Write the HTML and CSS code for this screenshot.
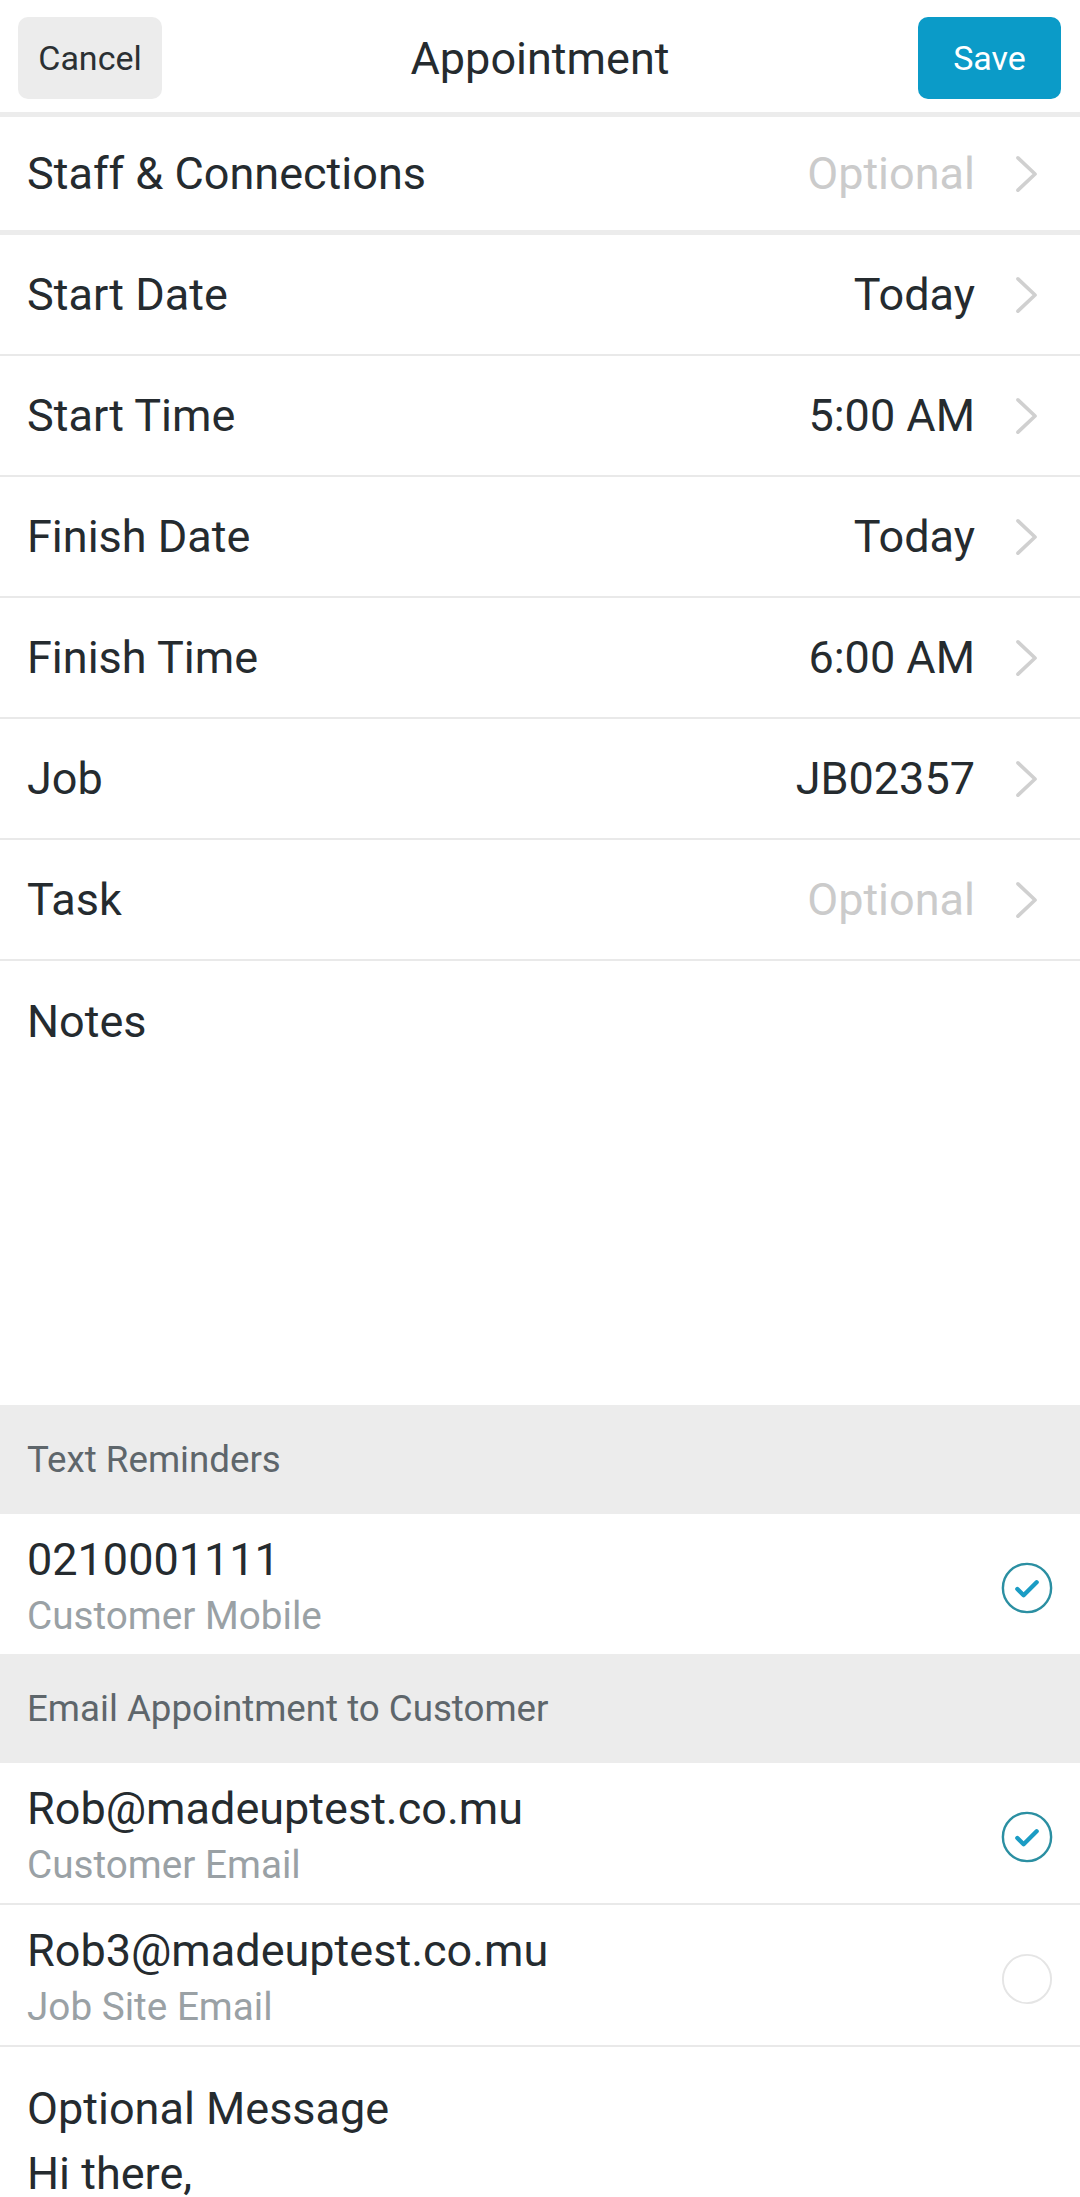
FILE: index.html
```html
<!DOCTYPE html>
<html lang="en">
<head>
    <meta charset="UTF-8">
    <meta name="viewport" content="width=device-width, initial-scale=1.0">
    <title>Appointment</title>
    <link rel="stylesheet" href="styles.css">
</head>
<body>
    <header class="topbar">
        <button class="btn btn-cancel">Cancel</button>
        <h1 class="title">Appointment</h1>
        <button class="btn btn-save">Save</button>
    </header>

    <div class="group group-staff">
        <div class="row">
            <span class="label">Staff &amp; Connections</span>
            <span class="value placeholder">Optional</span>
            <svg class="chevron" viewBox="0 0 24 40"><polyline points="3,3 21,20 3,37"/></svg>
        </div>
    </div>

    <div class="group">
        <div class="row">
            <span class="label">Start Date</span>
            <span class="value">Today</span>
            <svg class="chevron" viewBox="0 0 24 40"><polyline points="3,3 21,20 3,37"/></svg>
        </div>
        <div class="row">
            <span class="label">Start Time</span>
            <span class="value">5:00 AM</span>
            <svg class="chevron" viewBox="0 0 24 40"><polyline points="3,3 21,20 3,37"/></svg>
        </div>
        <div class="row">
            <span class="label">Finish Date</span>
            <span class="value">Today</span>
            <svg class="chevron" viewBox="0 0 24 40"><polyline points="3,3 21,20 3,37"/></svg>
        </div>
        <div class="row">
            <span class="label">Finish Time</span>
            <span class="value">6:00 AM</span>
            <svg class="chevron" viewBox="0 0 24 40"><polyline points="3,3 21,20 3,37"/></svg>
        </div>
        <div class="row">
            <span class="label">Job</span>
            <span class="value">JB02357</span>
            <svg class="chevron" viewBox="0 0 24 40"><polyline points="3,3 21,20 3,37"/></svg>
        </div>
        <div class="row">
            <span class="label">Task</span>
            <span class="value placeholder">Optional</span>
            <svg class="chevron" viewBox="0 0 24 40"><polyline points="3,3 21,20 3,37"/></svg>
        </div>
    </div>

    <div class="notes">
        <div class="label">Notes</div>
    </div>

    <div class="section-title">Text Reminders</div>
    <div class="contact">
        <div class="contact-text">
            <div class="contact-main">0210001111</div>
            <div class="contact-sub">Customer Mobile</div>
        </div>
        <svg class="tick on" viewBox="0 0 56 56">
            <circle cx="28" cy="28" r="25"/>
            <polyline points="18,29 24.5,35.5 38,22"/>
        </svg>
    </div>

    <div class="section-title">Email Appointment to Customer</div>
    <div class="contact bordered">
        <div class="contact-text">
            <div class="contact-main">Rob@madeuptest.co.mu</div>
            <div class="contact-sub">Customer Email</div>
        </div>
        <svg class="tick on" viewBox="0 0 56 56">
            <circle cx="28" cy="28" r="25"/>
            <polyline points="18,29 24.5,35.5 38,22"/>
        </svg>
    </div>
    <div class="contact bordered">
        <div class="contact-text">
            <div class="contact-main">Rob3@madeuptest.co.mu</div>
            <div class="contact-sub">Job Site Email</div>
        </div>
        <svg class="tick" viewBox="0 0 56 56">
            <circle cx="28" cy="28" r="25"/>
        </svg>
    </div>

    <div class="message">
        <div class="label">Optional Message</div>
        <div class="message-body">Hi there,</div>
    </div>
</body>
</html>
```

FILE: styles.css
```css
body {
    margin: 0;
    background-color: #ffffff;
    font-family: Roboto, "Noto Sans", sans-serif;
    color: #252b2f;
}

.topbar {
    height: 117px;
    box-sizing: border-box;
    padding: 17px 19px 13px 18px;
    display: flex;
    align-items: center;
    justify-content: space-between;
    border-bottom: 5px solid #ececec;
}

.title {
    margin: 0;
    font-size: 45px;
    font-weight: normal;
    color: #252b2f;
}

.btn {
    height: 82px;
    width: 144px;
    border: none;
    border-radius: 10px;
    font-family: Roboto, sans-serif;
    font-size: 34px;
    padding: 0;
}

.btn-cancel {
    background-color: #ececec;
    color: #2b3033;
}

.btn-save {
    width: 143px;
    background-color: #0b9bc8;
    color: #ffffff;
}

.group-staff {
    border-bottom: 5px solid #ececec;
}

.group-staff .row {
    height: 113px;
    border-bottom: none;
}

.row {
    height: 119px;
    display: flex;
    align-items: center;
    padding: 0 42px 0 27px;
    border-bottom: 2px solid #e9e9e9;
    font-size: 45px;
}

.label {
    font-size: 45px;
    line-height: 54px;
}

.value {
    margin-left: auto;
    margin-right: 40px;
}

.placeholder {
    color: #cbcbcb;
}

.chevron {
    width: 23px;
    height: 38px;
    fill: none;
    stroke: #d0d0d0;
    stroke-width: 3.8;
    stroke-linecap: round;
    stroke-linejoin: round;
}

.notes {
    height: 444px;
    box-sizing: border-box;
    padding: 34px 27px 0;
}

.section-title {
    height: 109px;
    display: flex;
    align-items: center;
    padding-left: 27px;
    background-color: #ececec;
    color: #5e666b;
    font-size: 36.7px;
}

.contact {
    height: 140px;
    box-sizing: border-box;
    padding: 19px 26px 12px 27px;
    display: flex;
    align-items: center;
}

.contact.bordered {
    height: 142px;
    border-bottom: 2px solid #e9e9e9;
}

.contact-text {
    flex: 1;
    align-self: flex-start;
}

.contact-main {
    font-size: 45px;
    line-height: 54px;
}

.contact-sub {
    margin-top: 3px;
    font-size: 38.7px;
    line-height: 52px;
    color: #9aa1a5;
}

.tick {
    width: 54px;
    height: 54px;
    fill: none;
    stroke: #e5e5e5;
    stroke-width: 2;
}

.tick.on circle {
    stroke: #2b8fa2;
    stroke-width: 2.5;
}

.tick.on polyline {
    stroke: #1b9cc4;
    stroke-width: 4.5;
    stroke-linecap: round;
    stroke-linejoin: round;
}

.message {
    padding: 35px 27px 0;
}

.message-body {
    margin-top: 11px;
    font-size: 45px;
    line-height: 54px;
}
```
